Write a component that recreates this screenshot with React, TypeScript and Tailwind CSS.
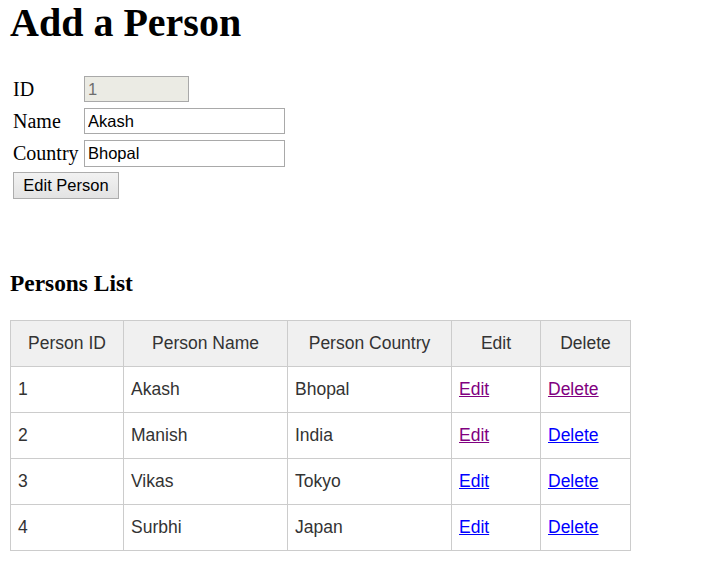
const persons = [
    { id: 1, name: "Akash", country: "Bhopal", editVisited: true, deleteVisited: true },
    { id: 2, name: "Manish", country: "India", editVisited: true, deleteVisited: false },
    { id: 3, name: "Vikas", country: "Tokyo", editVisited: false, deleteVisited: false },
    { id: 4, name: "Surbhi", country: "Japan", editVisited: false, deleteVisited: false },
];

const serif = "font-['Liberation_Serif','Times_New_Roman',serif]";
const sans = "font-['Liberation_Sans',Arial,sans-serif]";

const FormRow = ({ label, children }: { label: string; children: React.ReactNode }) => (
    <div className="flex items-center h-[32px]">
        <span className={`${serif} text-[20px] text-black w-[71px]`}>{label}</span>
        {children}
    </div>
);

const App = () => {
    return (
        <div className="bg-white min-h-[573px] px-[10px] text-black">
            <h1 className={`${serif} text-[40px] font-bold leading-[46px]`}>Add a Person</h1>

            <form className="mt-[27px] pl-[3px]" onSubmit={e => e.preventDefault()}>
                <FormRow label="ID">
                    <input
                        disabled
                        defaultValue="1"
                        className={`${sans} w-[105px] h-[26px] border border-[#a9a9a9] bg-[#ebebe4] pl-[3px] text-[16.5px] text-[#6d6d6d] outline-none`}
                    />
                </FormRow>
                <FormRow label="Name">
                    <input
                        defaultValue="Akash"
                        className={`${sans} w-[201px] h-[26px] border border-[#a9a9a9] bg-white pl-[3px] text-[16.5px] outline-none`}
                    />
                </FormRow>
                <FormRow label="Country">
                    <input
                        defaultValue="Bhopal"
                        className={`${sans} w-[201px] h-[27px] border border-[#a9a9a9] bg-white pl-[3px] text-[16.5px] outline-none`}
                    />
                </FormRow>
                <div className="flex items-center h-[32px]">
                    <button
                        type="submit"
                        className={`${sans} w-[106px] h-[27px] border border-[#adadad] bg-gradient-to-b from-[#f2f2f2] to-[#e3e3e3] text-[16.5px] text-black`}
                    >
                        Edit Person
                    </button>
                </div>
            </form>

            <h3 className={`${serif} mt-[69px] text-[23.4px] font-bold leading-[27px]`}>Persons List</h3>

            <table className={`${sans} mt-[23px] border-collapse table-fixed text-[17.5px] text-[#333]`}>
                <thead>
                    <tr className="h-[46px] bg-[#f0f0f0]">
                        <th className="w-[113px] border border-[#ccc] font-normal text-center">Person ID</th>
                        <th className="w-[164px] border border-[#ccc] font-normal text-center">Person Name</th>
                        <th className="w-[164px] border border-[#ccc] font-normal text-center">Person Country</th>
                        <th className="w-[89px] border border-[#ccc] font-normal text-center">Edit</th>
                        <th className="w-[90px] border border-[#ccc] font-normal text-center">Delete</th>
                    </tr>
                </thead>
                <tbody>
                    {persons.map(p => (
                        <tr key={p.id} className="h-[46px]">
                            <td className="border border-[#ccc] px-[7px]">{p.id}</td>
                            <td className="border border-[#ccc] px-[7px]">{p.name}</td>
                            <td className="border border-[#ccc] px-[7px]">{p.country}</td>
                            <td className="border border-[#ccc] px-[7px]">
                                <a href="#" className={`underline ${p.editVisited ? "text-[#800080]" : "text-[#0000ff]"}`}>Edit</a>
                            </td>
                            <td className="border border-[#ccc] px-[7px]">
                                <a href="#" className={`underline ${p.deleteVisited ? "text-[#800080]" : "text-[#0000ff]"}`}>Delete</a>
                            </td>
                        </tr>
                    ))}
                </tbody>
            </table>
        </div>
    );
}

export default App;
